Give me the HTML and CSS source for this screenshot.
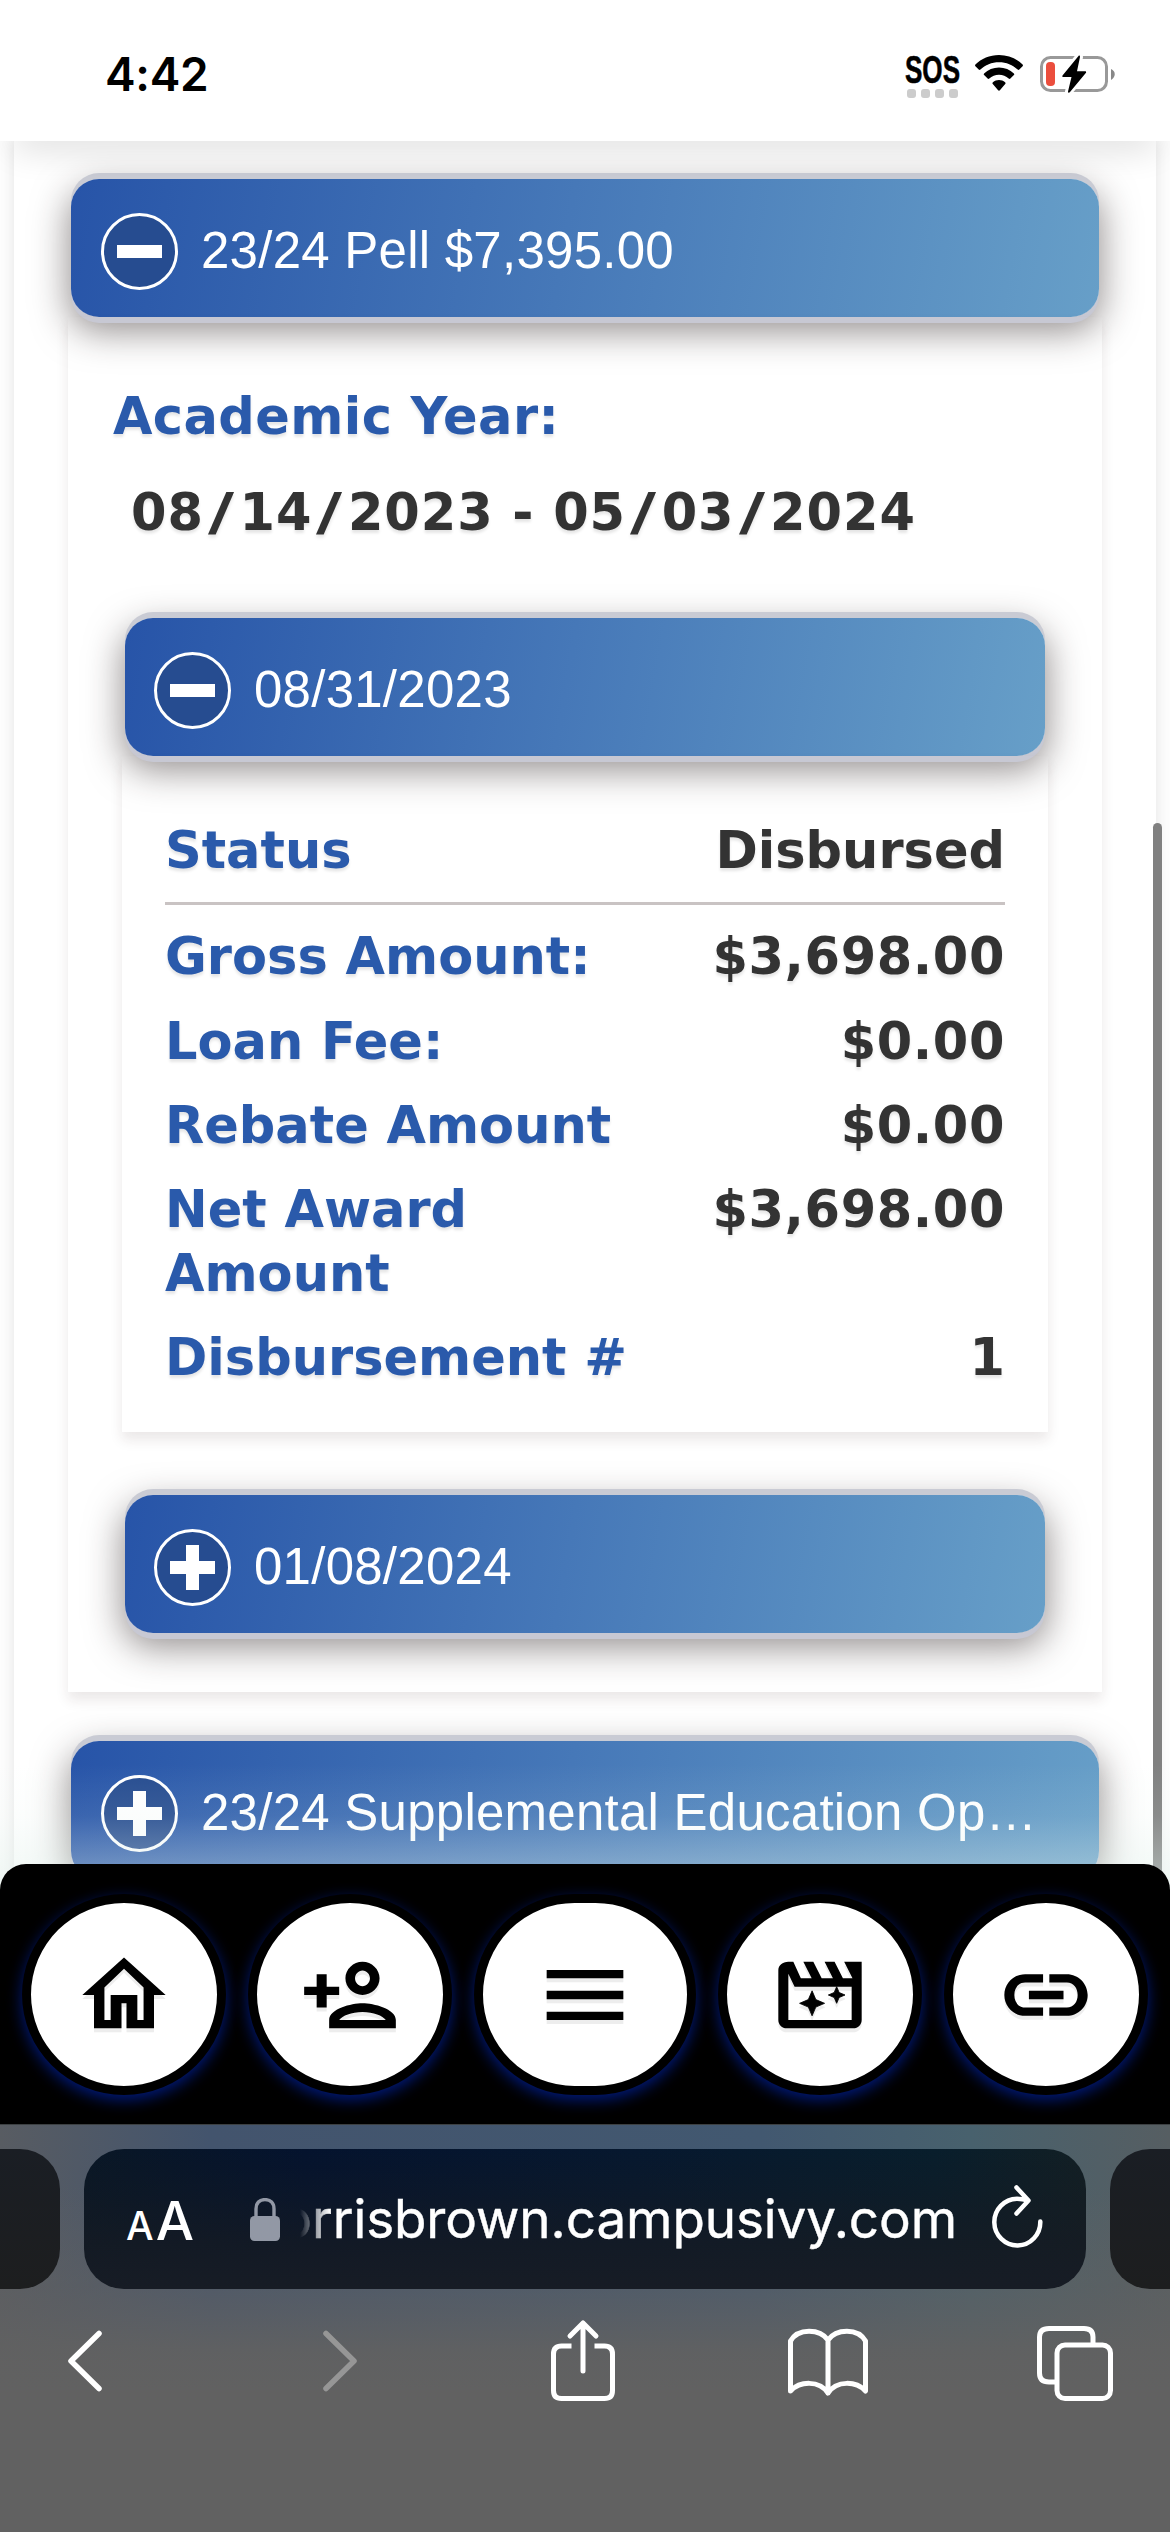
FILE: index.html
```html
<!DOCTYPE html>
<html lang="en">
<head>
    <meta charset="UTF-8">
    <meta name="viewport" content="width=device-width, initial-scale=1.0">
    <title>Awards</title>
    <link rel="stylesheet" href="styles.css">
</head>
<body>
    <header class="status-bar">
        <div class="time">4:42</div>
        <div class="status-icons">
            <div class="sos">
                <svg width="60" height="34" viewBox="0 0 60 34"><text x="0" y="28" textLength="55" lengthAdjust="spacingAndGlyphs">SOS</text></svg>
                <div class="dots"><i></i><i></i><i></i><i></i></div>
            </div>
            <svg class="wifi" width="48" height="36" viewBox="0 0 48 36">
                <path d="M24 0C14.700 0 6.300 3.700 .4 9.500c-.5.500-.5 1.200 0 1.700l3.300 3.300c.5.500 1.200.500 1.700 0C10.200 9.900 16.700 7.200 24 7.200s13.800 2.700 18.600 7.300c.5.500 1.200.500 1.700 0l3.300-3.300c.5-.5.500-1.200 0-1.700C41.700 3.700 33.300 0 24 0z"/>
                <path d="M24 12.500c-5.700 0-11 2.200-14.900 5.900-.5.500-.5 1.200 0 1.700l3.500 3.400c.5.500 1.200.500 1.700 0 2.600-2.400 6-3.800 9.700-3.800s7.100 1.400 9.700 3.800c.5.500 1.200.500 1.700 0l3.500-3.400c.5-.5.500-1.200 0-1.700C35 14.700 29.700 12.500 24 12.500z"/>
                <path d="M24 25c-2.300 0-4.400.8-6.100 2.200-.6.500-.6 1.300-.1 1.800l5.300 6.300c.5.600 1.300.6 1.800 0l5.300-6.300c.5-.5.500-1.300-.1-1.800C28.400 25.800 26.300 25 24 25z"/>
            </svg>
            <svg class="battery" width="76" height="40" viewBox="0 0 76 40">
                <rect x="1.500" y="3.500" width="65" height="33" rx="9" fill="none" stroke="#999" stroke-width="3"/>
                <path d="M71 15c5 2 5 8 0 11z" fill="#888"/>
                <rect x="6" y="8" width="9" height="24" rx="4" fill="#eb4e3d"/>
                <path d="M38.500 2L22.500 22.500h9L28 37.500c0 1 1 1 1.500.500L46 18.500c0-1 0-1-1-1h-8L40 3c0-1-.7-1.500-1.500-1z" stroke="#fff" stroke-width="6" fill="#fff"/>
                <path d="M38.500 2L22.500 21.500c-.5 1 0 1.500 1 1.500h8L28 37.500c0 1.500 1 1.500 1.800.800L46 18.800c.5-1 0-1.500-1-1.500h-8L40 3c0-1.300-.7-1.800-1.500-1z"/>
            </svg>
        </div>
    </header>

    <main class="page">
        <div class="card">
            <div class="bar">
                <span class="toggle minus"></span>
                <span class="bar-text">23/24 Pell $7,395.00</span>
            </div>
            <div class="panel">
                <div class="label year">Academic Year:</div>
                <div class="dates">08<i>/</i>14<i>/</i>2023 - 05<i>/</i>03<i>/</i>2024</div>

                <div class="bar">
                    <span class="toggle minus"></span>
                    <span class="bar-text">08/31/2023</span>
                </div>
                <div class="panel details">
                    <div class="row first"><span class="label">Status</span><span>Disbursed</span></div>
                    <div class="row"><span class="label">Gross Amount:</span><span class="amount">$3,698.00</span></div>
                    <div class="row"><span class="label">Loan Fee:</span><span class="amount">$0.00</span></div>
                    <div class="row"><span class="label">Rebate Amount</span><span class="amount">$0.00</span></div>
                    <div class="row"><span class="label">Net Award Amount</span><span class="amount">$3,698.00</span></div>
                    <div class="row"><span class="label">Disbursement #</span><span>1</span></div>
                </div>

                <div class="bar">
                    <span class="toggle plus"></span>
                    <span class="bar-text">01/08/2024</span>
                </div>
            </div>
            <div class="bar">
                <span class="toggle plus"></span>
                <span class="bar-text">23/24 Supplemental Education Op…</span>
            </div>
        </div>
        <div class="scrollbar"></div>
    </main>

    <nav class="site-nav">
        <a class="nav-btn"><svg viewBox="0 0 24 24"><path d="M12 5.690l4.700 4.500V18h-1.500v-6H8.800v6H7.300v-7.810L12 5.690M12 3L2 12h2.800v8h6.600v-6h1.200v6h6.600v-8H22L12 3z"/></svg></a>
        <a class="nav-btn"><svg viewBox="0 0 24 24"><path d="M15 12c2.210 0 4.100-1.790 4.100-4s-1.890-4-4.100-4-4.100 1.790-4.100 4 1.890 4 4.100 4zm0-5.900c1 0 1.800.9 1.800 1.900s-.8 1.900-1.800 1.900-1.800-.9-1.800-1.900.8-1.900 1.800-1.900zM15 14c-2.670 0-8 1.340-8 4v2h16v-2c0-2.660-5.330-4-8-4zm-5.600 4c.8-1 2.900-1.900 5.600-1.900s4.800.9 5.600 1.900H9.400zM6.400 15v-3h3v-2h-3V7H4v3H1v2h3v3h2.400z"/></svg></a>
        <a class="nav-btn wide"><svg viewBox="0 0 24 24"><path d="M2.800 18h18.400v-2H2.800v2zm0-5h18.400v-2H2.800v2zm0-7v2h18.400V6H2.800z"/></svg></a>
        <a class="nav-btn"><svg viewBox="0 0 24 24"><path fill-rule="evenodd" d="M22 4h-4.200l2 4h-2.300l-2-4h-2.400l2 4h-2.700l-2-4H8l2 4H7.400L5.600 4H4.400C3 4 2 4.900 2 6v12c0 1.100.9 2 2 2h16c1.100 0 2-.9 2-2V4zM5.900 10h13.700v8H4.400V6.900L5.900 10z"/><path d="M10.100 17l.9-2.100 2.100-.9-2.100-.9-.9-2.100-.9 2.100-2.100.9 2.100.9zM16 14l.6-1.400L18 12l-1.400-.6L16 10l-.6 1.400L14 12l1.400.6z" stroke="#000" stroke-width=".2"/></svg></a>
        <a class="nav-btn"><svg viewBox="0 0 24 24"><path d="M17 7h-4.200v2H17c1.650 0 2.600 1.350 2.600 3s-.95 3-2.600 3h-4.200v2H17c2.760 0 5-2.240 5-5s-2.240-5-5-5zm-5.700 8H7c-1.650 0-2.600-1.350-2.600-3S5.350 9 7 9h4.300V7H7c-2.760 0-5 2.240-5 5s2.240 5 5 5h4.300v-2zM7.900 11h8.300v2H7.900z"/></svg></a>
    </nav>

    <footer class="browser">
        <div class="tabs">
            <div class="tab side left"></div>
            <div class="tab address">
                <div class="text-size"><span>A</span>A</div>
                <svg class="lock" width="30" height="43" viewBox="0 0 30 43"><path d="M6 20V11C6 5 9.500 1.600 15 1.600S24 5 24 11v9" fill="none" stroke="#9298a5" stroke-width="3.400"/><rect y="18" width="30" height="25" rx="4.500" fill="#9298a5"/></svg>
                <div class="url"><span>orrisbrown.campusivy.com</span></div>
                <svg class="reload" width="54" height="66" viewBox="0 0 54 66"><path d="M36.500 16.500C33 15.200 29.500 14.800 26 14.800A23 23.300 0 1 0 49.300 37.500M25.500 3.500L37.500 16.500L25.500 29.500"/></svg>
            </div>
            <div class="tab side right"></div>
        </div>
        <div class="tools">
            <svg class="back" width="40" height="84" viewBox="0 0 40 84"><path d="M34 14.500L6 42L34 69.500" stroke-width="5.500"/></svg>
            <svg class="forward" width="40" height="84" viewBox="0 0 40 84"><path d="M6 14.500L34 42L6 69.500" stroke-width="5.500"/></svg>
            <svg width="64" height="84" viewBox="0 0 64 84"><path d="M20.500 27H10.500Q2.500 27 2.500 35V71.500Q2.500 79.500 10.500 79.500H53.500Q61.500 79.500 61.500 71.500V35Q61.500 27 53.500 27H43.500" stroke-linecap="butt"/><path d="M32 52V4M19 17L32 4L45 17"/></svg>
            <svg class="book" width="80" height="84" viewBox="0 0 80 84"><path d="M40 21C32 9.500 10 8.500 2.500 22V72C12 62 31 61 40 74C49 61 68 62 77.500 72V22C70 8.500 48 9.500 40 21V74"/></svg>
            <svg width="76" height="84" viewBox="0 0 76 84"><rect x="20" y="26" width="53.500" height="53.500" rx="8"/><path d="M19 63H12Q2.500 63 2.500 54V18Q2.500 9.500 12 9.500H47Q56 9.500 56 18V25"/></svg>
        </div>
    </footer>
</body>
</html>
```
FILE: styles.css
```css
* {
    box-sizing: border-box;
}

body {
    margin: 0;
    width: 1170px;
    height: 2532px;
    display: flex;
    flex-direction: column;
    overflow: hidden;
    background: #fff;
    color: #333;
    font-family: "Liberation Sans", Arial, sans-serif;
}

svg {
    display: block;
    flex: none;
}

/* status bar */
.status-bar {
    height: 141px;
    flex: none;
    display: flex;
    justify-content: space-between;
    align-items: flex-start;
    padding: 47px 54px 0 105px;
    background: #fff;
    color: #000;
}

.time {
    font: 600 46px/54px Inter, sans-serif;
    letter-spacing: -0.3px;
}

.status-icons {
    display: flex;
    align-items: flex-start;
}

.sos {
    width: 60px;
    padding-top: 8px;
    margin-right: 10px;
}

.sos svg {
    overflow: visible;
}

.sos text {
    font: bold 38px "Liberation Sans", Arial, sans-serif;
    stroke: #000;
    stroke-width: 0.6px;
}

.dots {
    display: flex;
    gap: 5px;
    padding-left: 2px;
}

.dots i {
    width: 9px;
    height: 9px;
    border-radius: 3px;
    background: #ccc;
}

.wifi {
    margin: 8px 17px 0 0;
}

.battery {
    margin-top: 7px;
}

/* page content */
.page {
    position: relative;
    flex: none;
    height: 1753px;
    overflow: hidden;
    padding: 0 14px;
    background: #fdfdfd;
}

.page::before {
    content: "";
    position: absolute;
    left: 14px;
    right: 14px;
    top: -20px;
    height: 20px;
    box-shadow: 0 4px 36px rgba(0, 0, 0, 0.2);
}

/* tint above the bottom bar */
.page::after {
    content: "";
    position: absolute;
    left: 0;
    right: 0;
    bottom: 0;
    height: 130px;
    background: linear-gradient(rgba(224, 240, 234, 0), rgba(224, 240, 234, 0.1) 40%, rgba(224, 240, 234, 0.38) 80%, rgba(224, 240, 234, 0.6));
}

.card {
    height: 1800px;
    padding: 38px 54px 0;
    background: #fff;
    box-shadow: 0 0 14px rgba(0, 0, 0, 0.1);
}

.bar {
    height: 138px;
    margin: 0 3px;
    padding: 6px 24px 0 30px;
    display: flex;
    align-items: center;
    gap: 23px;
    border-radius: 28px;
    background: linear-gradient(100deg, #2754a8, #4678b8 48%, #679fc8);
    box-shadow: 0 -6px 0 #c9cbd4, 0 6px 0 #c7c8d3, 0 12px 36px 2px rgba(40, 30, 30, 0.5);
    color: #fff;
    font-size: 51px;
    white-space: nowrap;
}

.bar-text {
    padding-bottom: 2px;
    letter-spacing: 0.25px;
}

.toggle {
    width: 77px;
    height: 77px;
    flex: none;
    border: 3px solid #fff;
    border-radius: 50%;
}

.minus {
    background: linear-gradient(#fff, #fff) center / 45px 13px no-repeat, #264c90;
}

.plus {
    background: linear-gradient(#fff, #fff) center / 45px 13px no-repeat, linear-gradient(#fff, #fff) center / 13px 45px no-repeat, #264c90;
}

.panel {
    margin-bottom: 49px;
    padding: 68px 54px 59px;
    box-shadow: 0 8px 12px rgba(60, 30, 30, 0.1);
    font: bold 51px/64px "DejaVu Sans", Verdana, sans-serif;
    text-shadow: 0 3px 3px rgba(0, 0, 0, 0.1);
}

.panel .bar {
    padding-left: 29px;
    font: 51px "Liberation Sans", Arial, sans-serif;
    text-shadow: none;
}

.label {
    color: #2a5aab;
}

.year {
    margin: 0 -9px 32px;
    letter-spacing: 0.4px;
}

.dates {
    margin: 0 -40px 73px 9px;
    letter-spacing: 0.95px;
    white-space: nowrap;
}

.dates i {
    display: inline-block;
    margin: 0 8px;
    font-style: normal;
    transform: scaleX(1.4);
}

.details {
    margin-bottom: 63px;
    padding: 63px 43px 42px;
}

.row {
    display: flex;
    justify-content: space-between;
    margin-top: 20.3px;
}

.row .label {
    max-width: 480px;
}

.amount {
    letter-spacing: 0.6px;
}

.row.first {
    margin: 0 0 19px;
    padding-bottom: 19px;
    border-bottom: 3px solid #c9c3c3;
}

.scrollbar {
    position: absolute;
    left: 1153px;
    top: 682px;
    width: 9px;
    height: 1100px;
    border-radius: 5px;
    background: #808080;
}

/* site navigation */
.site-nav {
    position: relative;
    height: 260px;
    flex: none;
    margin-top: -30px;
    padding: 30px 22px;
    display: flex;
    justify-content: space-between;
    align-items: flex-start;
    border-radius: 26px 26px 0 0;
    background: #000;
}

.nav-btn {
    width: 204px;
    height: 201px;
    display: flex;
    align-items: center;
    justify-content: center;
    border: 9px solid #000;
    border-radius: 50%;
    background: #fff;
    box-shadow: 0 5px 15px rgba(0, 40, 190, 0.65);
}

.nav-btn.wide {
    width: 222px;
    border-radius: 101px;
}

.nav-btn svg {
    width: 100px;
    height: 100px;
    filter: drop-shadow(0 4px 0 rgba(0, 0, 0, 0.07));
}

/* browser bar */
.browser {
    height: 408px;
    flex: none;
    border-top: 1px solid #3c4042;
    background: linear-gradient(rgba(97, 97, 97, 0) 15%, rgba(97, 97, 97, 0.55) 42%, rgba(97, 97, 97, 0.95) 56%, #616161 65%), linear-gradient(90deg, #585c62, #43546d 18%, #425870 65%, #48616d 83%, #565e62);
}

.tabs {
    display: flex;
    gap: 24px;
    padding-top: 24px;
}

.tab {
    height: 140px;
    background: linear-gradient(#1a1e24, #1d1e1f);
}

.side {
    width: 60px;
}

.left {
    border-radius: 0 40px 40px 0;
}

.right {
    border-radius: 40px 0 0 40px;
}

.address {
    flex: 1;
    display: flex;
    align-items: flex-start;
    padding-left: 42px;
    border-radius: 40px;
    background: linear-gradient(rgba(22, 27, 35, 0), rgba(22, 27, 35, 0.75) 65%, #171c25), linear-gradient(90deg, #091726, #04132e 22%, #06182f 55%, #081e2c 85%, #121f24);
    color: #fff;
}

.text-size {
    width: 124px;
    padding-top: 38px;
    font: 500 54px/68px Inter, sans-serif;
    letter-spacing: -3px;
}

.text-size span {
    font-size: 39px;
    margin-right: 5px;
}

.lock {
    margin: 49px 20px 0 0;
}

.url {
    width: 657px;
    padding-top: 37px;
    display: flex;
    justify-content: flex-end;
    overflow: hidden;
    font: 53px/66px Inter, sans-serif;
    letter-spacing: -0.1px;
    -webkit-text-stroke: 0.4px #fff;
    -webkit-mask-image: linear-gradient(90deg, transparent, rgba(0, 0, 0, 0.3) 8px, rgba(0, 0, 0, 0.6) 16px, #000 30px);
    mask-image: linear-gradient(90deg, transparent, rgba(0, 0, 0, 0.3) 8px, rgba(0, 0, 0, 0.6) 16px, #000 30px);
}

.reload {
    margin: 35px 0 0 34px;
    fill: none;
    stroke: #fff;
    stroke-width: 4.5px;
    stroke-linecap: round;
    stroke-linejoin: round;
}

.tools {
    display: flex;
    justify-content: space-between;
    padding: 30px 57px 0 65px;
}

.tools svg {
    fill: none;
    stroke: #fff;
    stroke-width: 5px;
    stroke-linecap: round;
    stroke-linejoin: round;
}

.tools .back {
    margin-right: 46px;
}

.tools .forward {
    margin-right: 21px;
    stroke: #969696;
}

.tools .book {
    margin-left: 4px;
}
```
